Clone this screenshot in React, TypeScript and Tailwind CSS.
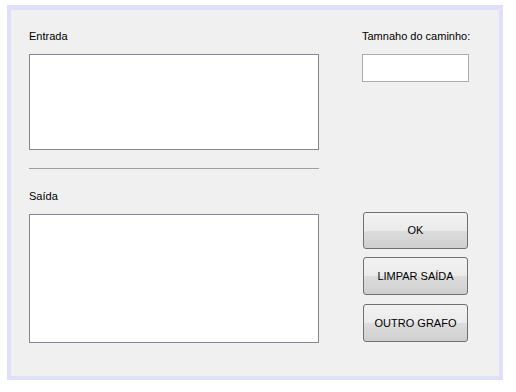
const font = "font-['Tahoma','Liberation_Sans',sans-serif] text-[11px] leading-[13px] text-black whitespace-nowrap";

function WinButton({ label, className }: { label: string; className?: string }) {
    return (
        <button
            className={`w-[105px] rounded-[3px] border border-[#707070] bg-[linear-gradient(to_bottom,#f2f2f2_0%,#ebebeb_50%,#dddddd_50%,#cfcfcf_100%)] ${font} ${className ?? ""}`}
        >
            {label}
        </button>
    );
}

export default function App() {
    return (
        <div className="w-[516px] h-[392px] bg-white pl-[7px] pt-[5px]">
            <div className="w-[496px] h-[375px] border-[#dfdff9] border-l-4 border-r-4 border-b-4 border-t-[5px] bg-[#f0f0f0] flex">
                {/* left column */}
                <div className="ml-[18px] w-[290px] flex flex-col">
                    <div className={`mt-[20px] ${font}`}>Entrada</div>
                    <div className="mt-[11px] h-[96px] border border-[#828790] bg-white" />
                    <div className="mt-[18px] h-px bg-[#a0a0a0]" />
                    <div className={`mt-[21px] ${font}`}>Saída</div>
                    <div className="mt-[11px] h-[129px] border border-[#828790] bg-white" />
                </div>

                {/* right column */}
                <div className="ml-[43px] w-[107px] flex flex-col">
                    <div className={`mt-[20px] ${font}`}>Tamnaho do caminho:</div>
                    <div className="mt-[11px] h-[28px] border border-[#abadb3] bg-white" />
                    <div className="mt-[130px] ml-px flex flex-col">
                        <WinButton label="OK" className="h-[37px]" />
                        <WinButton label="LIMPAR SAÍDA" className="mt-[8px] h-[38px]" />
                        <WinButton label="OUTRO GRAFO" className="mt-[9px] h-[38px]" />
                    </div>
                </div>
            </div>
        </div>
    );
}
